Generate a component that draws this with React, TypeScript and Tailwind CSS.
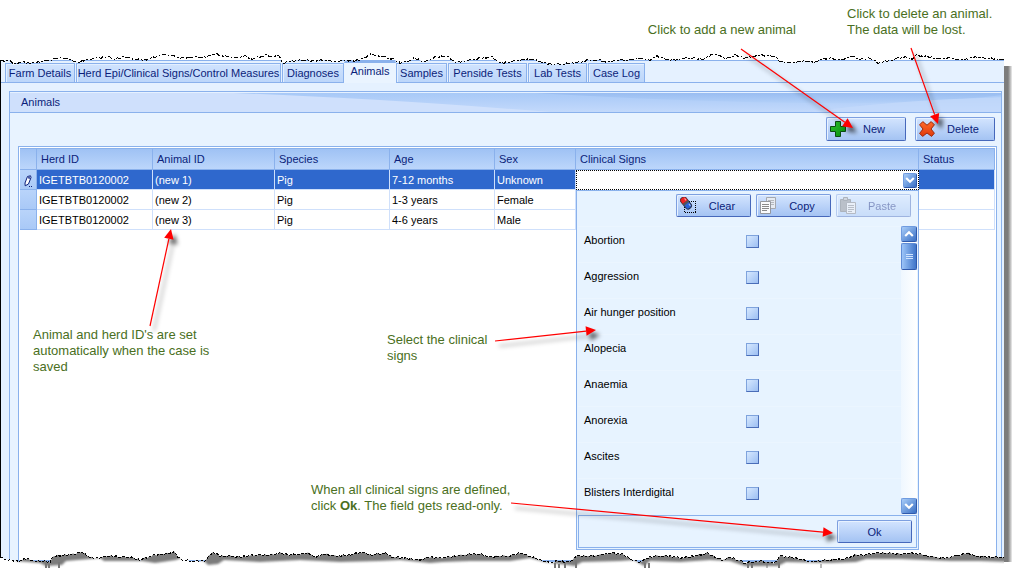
import React from "react";

type Pt = [number, number];

const TOP_EDGE: Pt[] = [
  [0, 61], [8, 60], [14, 64], [20, 62], [32, 63], [40, 62], [50, 60], [58, 58], [70, 59], [78, 63], [85, 60], [95, 58],
  [108, 57], [115, 59], [125, 57], [135, 59], [145, 60], [155, 57], [163, 54], [172, 56], [180, 58], [192, 57], [205, 57],
  [215, 54], [226, 56], [235, 58], [245, 56], [252, 59], [262, 56], [266, 55], [272, 57], [278, 55], [283, 63], [290, 61],
  [305, 60], [315, 61], [325, 60], [335, 62], [345, 60], [355, 61], [364, 58], [371, 54], [385, 57], [393, 59], [400, 63],
  [408, 61], [415, 58], [425, 62], [435, 57], [447, 56], [455, 62], [465, 61], [480, 58], [492, 57], [500, 63], [510, 62],
  [520, 60], [530, 59], [538, 61], [550, 64], [560, 64], [575, 63], [588, 60], [600, 60], [608, 62], [618, 60], [630, 60],
  [640, 58], [650, 60], [657, 56], [662, 58], [670, 60], [690, 58], [705, 59], [712, 54], [718, 55], [726, 59], [735, 55],
  [745, 58], [758, 55], [775, 56], [779, 61], [790, 63], [805, 61], [815, 62], [822, 59], [830, 58], [842, 60], [850, 56],
  [860, 59], [870, 58], [878, 63], [890, 60], [905, 57], [912, 59], [916, 55], [930, 57], [940, 59], [950, 58], [960, 60],
  [970, 58], [975, 57], [983, 58], [990, 58], [1004, 60],
];

const BOTTOM_EDGE: Pt[] = [
  [0, 558], [10, 560], [20, 561], [28, 558], [32, 561], [45, 561], [50, 562], [54, 556], [65, 555], [74, 554], [81, 552],
  [88, 556], [93, 558], [100, 558], [107, 556], [112, 556], [120, 557], [130, 557], [140, 560], [145, 558], [155, 555],
  [165, 554], [174, 552], [180, 559], [190, 561], [205, 561], [209, 556], [213, 552], [220, 556], [230, 556], [240, 557],
  [255, 555], [270, 555], [280, 553], [290, 555], [300, 554], [309, 553], [314, 557], [325, 554], [335, 556], [350, 555],
  [362, 552], [370, 555], [385, 553], [392, 557], [405, 558], [418, 560], [430, 557], [440, 558], [455, 556], [470, 554],
  [480, 554], [490, 557], [500, 556], [510, 556], [520, 553], [530, 556], [540, 560], [550, 563], [558, 561], [570, 562],
  [576, 556], [590, 556], [600, 555], [610, 553], [622, 554], [632, 560], [640, 562], [648, 558], [655, 556], [670, 556],
  [680, 558], [695, 556], [707, 553], [715, 557], [722, 560], [730, 557], [738, 560], [745, 563], [760, 561], [775, 563],
  [780, 556], [790, 557], [800, 559], [810, 562], [825, 560], [845, 559], [855, 555], [865, 555], [875, 553], [890, 553],
  [900, 554], [910, 553], [920, 554], [932, 557], [945, 558], [955, 556], [968, 553], [975, 556], [990, 557], [1004, 557],
];

const JITTER = [0, -1, 1, 0, 1, -1, 0, 1, -1, 1, 0];

function roughen(points: Pt[]): string {
  const out: string[] = [];
  let n = 0;
  for (let i = 0; i < points.length - 1; i++) {
    const [x0, y0] = points[i];
    const [x1, y1] = points[i + 1];
    for (let x = x0; x < x1; x += 2) {
      const y = y0 + ((y1 - y0) * (x - x0)) / (x1 - x0) + JITTER[n++ % JITTER.length] * 0.8;
      out.push(`${x} ${y.toFixed(1)}`);
    }
  }
  const last = points[points.length - 1];
  out.push(`${last[0]} ${last[1]}`);
  return "L" + out.join("L");
}

const topPath = roughen(TOP_EDGE);
const bottomPath = roughen(BOTTOM_EDGE);

function TornTop() {
  return (
    <svg aria-hidden="true" className="pointer-events-none absolute left-0 top-0 h-[68px] w-full" viewBox="0 0 1004 68" preserveAspectRatio="none">
      <path d={`M0 0${topPath}L1004 0Z`} fill="#fff" />
      <path d={"M" + topPath.slice(1)} fill="none" stroke="#000" strokeDasharray="5 2 2 1.5" shapeRendering="crispEdges" />
    </svg>
  );
}

function TornBottom() {
  return (
    <svg aria-hidden="true" className="pointer-events-none absolute bottom-0 left-0 h-[20px] w-full" viewBox="0 548 1004 20" preserveAspectRatio="none">
      <defs>
        <clipPath id="below">
          <path d={`M0 568${bottomPath}L1004 568Z`} />
        </clipPath>
        <filter id="soft" x="-5%" y="-50%" width="110%" height="200%">
          <feGaussianBlur stdDeviation="1.3" />
        </filter>
      </defs>
      <path d={`M0 568${bottomPath}L1004 568Z`} fill="#fff" />
      <g clipPath="url(#below)">
        <path
          filter="url(#soft)"
          fill="#7c7c7c"
          d="M16 540V561L40 563L46 566L62 565L66 561L90 559L100 558L104 561L125 561L142 561L155 563L176 560L184 557L204 561L208 565L218 564L224 560L260 562L300 560L340 562L380 561L400 560L430 563L442 562L470 561L510 561L530 558L545 562L575 566L582 562L620 561L634 560L644 566L650 561L680 562L710 560L730 561L745 566L778 566L786 562L830 563L856 562L866 559L900 559L925 560L950 561L980 561L1010 562V540Z"
        />
        <path d="M46 563V568M49 564V568M59 562V568M555 563V568M559 564V568M565 563V568M576 560V568M645 563V568M649 563V568M748 562V568M752 562V568M779 560V568" stroke="#777" strokeWidth="2" />
        <path d="M767 564V568M821 564V568" stroke="#777" />
      </g>
      <path d={"M" + bottomPath.slice(1)} fill="none" stroke="#000" strokeDasharray="3 1.5" shapeRendering="crispEdges" />
    </svg>
  );
}

function Arrow({ from, to, side }: { from: Pt; to: Pt; side: "left" | "right" }) {
  const dx = to[0] - from[0];
  const dy = to[1] - from[1];
  const len = Math.hypot(dx, dy);
  const ux = dx / len;
  const uy = dy / len;
  const bx = to[0] - ux * 10;
  const by = to[1] - uy * 10;
  const head = `M${to[0]} ${to[1]}L${bx - uy * 4.8} ${by + ux * 4.8}L${bx + uy * 4.8} ${by - ux * 4.8}Z`;
  const shaft = `M${from[0]} ${from[1]}L${bx} ${by}`;
  return (
    <svg
      aria-hidden="true"
      className={
        side === "left"
          ? "pointer-events-none absolute left-0 top-0 z-30 h-[568px] w-[1012px]"
          : "pointer-events-none absolute right-0 top-0 z-30 h-[568px] w-[1012px]"
      }
      viewBox="0 0 1012 568"
    >
      <g transform="translate(4 5)" className="blur-[2px]">
        <path d={shaft} stroke="#000" strokeOpacity=".22" strokeWidth="2.5" />
        <path d={head} fill="#000" fillOpacity=".6" />
      </g>
      <path d={shaft} stroke="#f00" strokeWidth="1.2" />
      <path d={head} fill="#f00" />
    </svg>
  );
}

function Note({ className, children }: { className: string; children: React.ReactNode }) {
  return <p className={`absolute z-30 text-[13px] leading-4 text-[#4a6f22] ${className}`}>{children}</p>;
}

function PlusIcon() {
  return (
    <svg viewBox="0 0 16 16" className="size-4 shrink-0" aria-hidden="true">
      <defs>
        <linearGradient id="plus" x1="0" y1="0" x2="1" y2="1">
          <stop offset="0" stopColor="#2fc42e" />
          <stop offset="1" stopColor="#058a0b" />
        </linearGradient>
      </defs>
      <path d="M5.5.5h5v5h5v5h-5v5h-5v-5h-5v-5h5z" fill="url(#plus)" stroke="#0a4d10" />
    </svg>
  );
}

function CrossIcon() {
  return (
    <svg viewBox="0 0 16 16" className="size-4 shrink-0" aria-hidden="true">
      <defs>
        <linearGradient id="cross" x1="0" y1="0" x2="0" y2="1">
          <stop offset="0" stopColor="#ff6a2c" />
          <stop offset="1" stopColor="#e03a08" />
        </linearGradient>
      </defs>
      <path
        d="M3.8.6 8 4.2 12.2.6 15.4 3.8 12 8 15.400 12.200 12.600 15.400 8 12 3.600 15.400.6 12.400 4 8 .6 3.800Z"
        fill="url(#cross)"
        stroke="#9c2a0c"
        strokeLinejoin="round"
      />
    </svg>
  );
}

function ClearIcon() {
  return (
    <svg viewBox="0 0 17 17" className="size-[17px] shrink-0" aria-hidden="true">
      <rect x="4.5" y="4.5" width="11" height="11" fill="none" stroke="#000" strokeDasharray="1 1" shapeRendering="crispEdges" />
      <g transform="rotate(52 6 6)">
        <rect x="-.5" y="2.8" width="13" height="6.4" rx="2.6" fill="#2a62d8" stroke="#2b3350" />
        <path d="M2.2 2.8H5v6.4H2.2A2.6 2.6 0 0 1-.5 6.6V5.4A2.6 2.6 0 0 1 2.2 2.8Z" fill="#ee2222" stroke="#6b3030" strokeWidth=".6" />
        <rect x="5" y="2.8" width="2" height="6.4" fill="#555" />
        <path d="M1.5 4.3h2.5M8.500 4.300h2.500" stroke="#fff" strokeOpacity=".6" />
      </g>
    </svg>
  );
}

function CopyIcon() {
  return (
    <svg viewBox="0 0 17 17" className="size-[17px] shrink-0" aria-hidden="true">
      <path d="M6.500.5h9v11h-9z" fill="#e6ebf2" stroke="#a5a8ae" />
      <path d="M8 3.500h6M8 5.500h6M8 7.500h6" stroke="#b5b8bd" />
      <path d="M.5 4.500h10v12H.5z" fill="#fafbfd" stroke="#95989e" />
      <path d="M2 7.500h7M2 9.500h7M2 11.500h7M2 13.500h5" stroke="#8a8a8a" />
    </svg>
  );
}

function PasteIcon() {
  return (
    <svg viewBox="0 0 17 17" className="size-[17px] shrink-0" aria-hidden="true">
      <path d="M.5 2.500h10v12H.5z" fill="#84848a" stroke="#66666c" />
      <path d="M3.500.5h4v3h-4z" fill="#b5b5b9" stroke="#66666c" />
      <path d="M6.500 5.500h9v11h-9z" fill="#ececf0" stroke="#77777d" />
      <path d="M8 8.500h6M8 10.500h6M8 12.500h6M8 14.500h4" stroke="#808086" />
    </svg>
  );
}

function Chevron({ up = false }: { up?: boolean }) {
  return (
    <svg viewBox="0 0 10 8" className="h-2 w-[10px]" aria-hidden="true">
      <path d={up ? "M1.200 6 5 2.300 8.800 6" : "M1.200 2 5 5.700 8.800 2"} fill="none" stroke="#fff" strokeWidth="2.200" />
    </svg>
  );
}

const BTN =
  "flex items-center rounded-[2px] border border-[#7d9fe0] border-b-[#4668bb] border-r-[#4668bb] bg-linear-to-b from-[#d3e4fe] to-[#a4c3f3] text-[#0b1e7a] shadow-[inset_1px_1px_0_#e8f2ff]";

const BLUE_BTN =
  "flex items-center justify-center rounded-[2px] border border-[#6f9be0] border-b-[#2f59ac] border-r-[#2f59ac] bg-linear-to-br from-[#a9cdf8] to-[#396fc4]";

function ToolButton({ icon, label, size, disabled }: { icon?: React.ReactNode; label: string; size: "lg" | "sm"; disabled?: boolean }) {
  return (
    <button type="button" disabled={disabled} className={`${BTN} ${size === "lg" ? "h-6 w-20 px-[3px]" : "h-[23px] w-[75px] px-[3px]"} ${disabled ? "opacity-45" : ""}`}>
      {icon}
      <span className="flex-1 text-center">{label}</span>
    </button>
  );
}

const TABS_BEFORE = [
  { label: "Farm Details", width: "w-[70px]" },
  { label: "Herd Epi/Clinical Signs/Control Measures", width: "w-[205px]" },
  { label: "Diagnoses", width: "w-[62px]" },
];
const TABS_AFTER = [
  { label: "Samples", width: "w-[51px]" },
  { label: "Penside Tests", width: "w-[79px]" },
  { label: "Lab Tests", width: "w-[59px]" },
  { label: "Case Log", width: "w-[57px]" },
];

function Tab({ label, width }: { label: string; width: string }) {
  return (
    <button
      type="button"
      role="tab"
      aria-selected={false}
      className={`${width} h-[19px] whitespace-nowrap border border-b-0 border-[#8ab1ec] bg-linear-to-b from-[#d0e3fe] to-[#bcd6fa] text-center shadow-[inset_1px_1px_0_#e3efff]`}
    >
      {label}
    </button>
  );
}

const SIGNS = ["Abortion", "Aggression", "Air hunger position", "Alopecia", "Anaemia", "Anorexia", "Ascites", "Blisters Interdigital"];

function SignsPopup() {
  return (
    <div className="absolute inset-x-0 top-full z-20 border border-[#8ab1ec] bg-[#e7f3ff] p-px text-black">
      <div className="flex justify-end gap-[5px] pb-[9px] pr-[6px] pt-[2px]">
        <ToolButton size="sm" icon={<ClearIcon />} label="Clear" />
        <ToolButton size="sm" icon={<CopyIcon />} label="Copy" />
        <ToolButton size="sm" icon={<PasteIcon />} label="Paste" disabled />
      </div>
      <div className="flex">
        <ul className="min-w-0 flex-1">
          {SIGNS.map((sign, i) => (
            <li key={sign} className="flex h-9 items-start border-t border-[#ebf5ff] pl-[6px] pt-[6px]">
              <label htmlFor={`sign-${i}`} className="w-[162px] leading-[14px]">
                {sign}
              </label>
              <input
                id={`sign-${i}`}
                type="checkbox"
                className="mt-[2px] size-[13px] appearance-none border border-[#7fa3dd] border-b-[#4a6db8] border-r-[#4a6db8] bg-linear-to-br from-[#d6e8ff] to-[#9dbff2] checked:bg-[#2f68cd]"
              />
            </li>
          ))}
        </ul>
        <div className="flex w-4 flex-col gap-px bg-linear-to-r from-[#eff7ff] to-white">
          <button type="button" aria-label="Scroll up" className={`${BLUE_BTN} h-4`}>
            <Chevron up />
          </button>
          <div className="flex h-[27px] flex-col items-center justify-center gap-px rounded-[2px] border border-[#5f8cd6] border-b-[#2f59ac] border-r-[#2f59ac] bg-linear-to-r from-[#9cc4f7] to-[#3f75c9]">
            <span className="h-px w-[7px] bg-[#cfe3ff]" />
            <span className="h-px w-[7px] bg-[#cfe3ff]" />
            <span className="h-px w-[7px] bg-[#cfe3ff]" />
          </div>
          <button type="button" aria-label="Scroll down" className={`${BLUE_BTN} mt-auto h-4`}>
            <Chevron />
          </button>
        </div>
      </div>
      <div className="mt-px flex justify-end border border-[#8ab1ec] p-1">
        <ToolButton size="sm" label="Ok" />
      </div>
    </div>
  );
}

const ROWS = [
  { herd: "IGETBTB0120002", id: "(new 1)", species: "Pig", age: "7-12 months", sex: "Unknown" },
  { herd: "IGETBTB0120002", id: "(new 2)", species: "Pig", age: "1-3 years", sex: "Female" },
  { herd: "IGETBTB0120002", id: "(new 3)", species: "Pig", age: "4-6 years", sex: "Male" },
];

const HEADERS = ["Herd ID", "Animal ID", "Species", "Age", "Sex", "Clinical Signs", "Status"];

function AnimalsTable() {
  return (
    <table className="w-full table-fixed border-separate border-spacing-0 text-left">
      <colgroup>
        <col className="w-[17px]" />
        <col className="w-[116px]" />
        <col className="w-[122px]" />
        <col className="w-[115px]" />
        <col className="w-[105px]" />
        <col className="w-[81px]" />
        <col />
        <col className="w-[76px]" />
      </colgroup>
      <thead className="text-[#0b1e7a]">
        <tr className="h-[22px]">
          <td className="border-b border-r border-t border-[#8ab1ec] bg-linear-to-b from-[#9fc2f4] to-[#bcd6fb]" />
          {HEADERS.map((h) => (
            <th key={h} scope="col" className="border-b border-r border-t border-[#8ab1ec] bg-linear-to-b from-[#9fc2f4] to-[#bcd6fb] p-0 pl-[4px] font-normal">
              {h}
            </th>
          ))}
        </tr>
      </thead>
      <tbody>
        {ROWS.map((r, i) => {
          const active = i === 0;
          const cell = active
            ? "border-b border-r border-[#cfe0fb] bg-[#2f68cd] p-0 pl-[2px] text-white"
            : "border-b border-r border-[#cfe0fb] bg-white p-0 pl-[2px] text-black";
          return (
            <tr key={r.id} className="h-5">
              <td className="border-b border-r border-[#8ab1ec] bg-linear-to-b from-[#b9d4fa] to-[#a9c9f7] p-0">
                {active && (
                  <svg viewBox="0 0 8 12" className="ml-[4px] mt-[3px] h-3 w-2" aria-hidden="true">
                    <path d="M3.500 1.500 6.500.800 7 2.500 4.500 9 1.200 10.800 1 8Z" fill="#fff" stroke="#0b1e7a" />
                    <path d="M4 1.500 6.500 1 6 4 4 3.500Z" fill="#4a5ea8" />
                    <path d="M5 11.500H6M7 11.500H8" stroke="#0b1e7a" />
                  </svg>
                )}
              </td>
              <td className={cell}>{r.herd}</td>
              <td className={cell}>{r.id}</td>
              <td className={cell}>{r.species}</td>
              <td className={cell}>{r.age}</td>
              <td className={cell}>{r.sex}</td>
              {active ? (
                <td className="border-r border-[#8ab1ec] bg-white p-0">
                  <div className="relative -mr-px h-5">
                    <div className="flex h-5 items-center border border-dotted border-black bg-white pr-px">
                      <input aria-label="Clinical Signs" role="combobox" aria-expanded="true" readOnly className="h-4 min-w-0 flex-1 bg-transparent px-1 outline-none" />
                      <button type="button" aria-label="Close list" className={`${BLUE_BTN} h-[15px] w-[14px]`}>
                        <Chevron />
                      </button>
                    </div>
                    <SignsPopup />
                  </div>
                </td>
              ) : (
                <td className={cell} />
              )}
              <td className={cell} />
            </tr>
          );
        })}
      </tbody>
    </table>
  );
}

export default function App() {
  return (
    <main className="relative bg-white pt-[60px] font-['Liberation_Sans',Arial,sans-serif] text-[11px] leading-[14px]">
      <div className="flex pb-[6px]">
        <div className="min-w-0 flex-1 border-l border-t border-l-black border-t-[#8ab1ec] bg-[#e5f1ff]">
          <div role="tablist" className="flex items-end gap-px border-b border-[#8ab1ec] pl-1 text-[#0b1e7a]">
            {TABS_BEFORE.map((t) => (
              <Tab key={t.label} {...t} />
            ))}
            <button
              type="button"
              role="tab"
              aria-selected="true"
              className="-mx-px -mb-px h-[22px] w-[52px] whitespace-nowrap rounded-t-[2px] border-t-2 border-[#8ab1ec] bg-[#eaf4ff] pb-[4px] text-center"
            >
              Animals
            </button>
            {TABS_AFTER.map((t) => (
              <Tab key={t.label} {...t} />
            ))}
          </div>

          <section aria-labelledby="group-title" className="ml-2 mr-[2px] mt-2 border border-[#8ab1ec] bg-[#e8f3ff]">
            <div className="relative border-b border-[#8ab1ec] bg-[#cfe0fc]">
              <svg aria-hidden="true" className="absolute inset-0 h-full w-full" viewBox="0 0 991 19" preserveAspectRatio="none">
                <defs>
                  <linearGradient id="band" x1="0" y1="0" x2="0" y2="1">
                    <stop offset="0" stopColor="#a6c8f7" />
                    <stop offset="1" stopColor="#c3d9fb" />
                  </linearGradient>
                  <linearGradient id="band2" x1="0" y1="0" x2="0" y2="1">
                    <stop offset="0" stopColor="#96bbf1" />
                    <stop offset="1" stopColor="#b3d0f8" />
                  </linearGradient>
                </defs>
                <path d="M190 0Q340 4 540 19H991V0Z" fill="url(#band)" />
                <path d="M510 0Q620 7 760 10T991 3V0Z" fill="url(#band2)" />
                <path d="M800 19Q880 8 991 5V19Z" fill="#c4dafb" fillOpacity=".7" />
                <path d="M0 .5H991" stroke="#e6f1ff" />
              </svg>
              <h2 id="group-title" className="relative py-[3px] pl-[11px] leading-[14px] text-[#0b1e7a]">
                Animals
              </h2>
            </div>
            <div className="flex justify-end gap-[9px] pb-[5px] pr-[6px] pt-[4px]">
              <ToolButton size="lg" icon={<PlusIcon />} label="New" />
              <ToolButton size="lg" icon={<CrossIcon />} label="Delete" />
            </div>
            <div className="ml-2 mr-1 min-h-[415px] border border-[#8ab1ec] bg-white p-px">
              <AnimalsTable />
            </div>
          </section>
        </div>
        <div aria-hidden="true" className="mt-[6px] w-2 bg-linear-to-r from-[#7c7c7c] from-50% to-[#eeeeee]" />
      </div>

      <div className="pointer-events-none absolute inset-y-0 left-0 right-2 z-20">
        <TornTop />
        <TornBottom />
      </div>

      <Note className="right-[216px] top-[22px] whitespace-nowrap">Click to add a new animal</Note>
      <Note className="right-[17px] top-[6px] w-[148px]">
        Click to delete an animal.
        <br />
        The data will be lost.
      </Note>
      <Note className="left-[33px] top-[327px] w-[190px]">Animal and herd ID's are set automatically when the case is saved</Note>
      <Note className="left-[387px] top-[332px] w-[110px]">Select the clinical signs</Note>
      <Note className="right-[481px] top-[482px] w-[220px]">
        When all clinical signs are defined,
        <br />
        click <b>Ok</b>. The field gets read-only.
      </Note>

      <Arrow side="right" from={[741, 49]} to={[853, 128]} />
      <Arrow side="right" from={[911, 48]} to={[938, 124]} />
      <Arrow side="left" from={[150, 326]} to={[171, 229]} />
      <Arrow side="left" from={[495, 341]} to={[596, 330]} />
      <Arrow side="right" from={[511, 503]} to={[833, 533]} />
    </main>
  );
}
